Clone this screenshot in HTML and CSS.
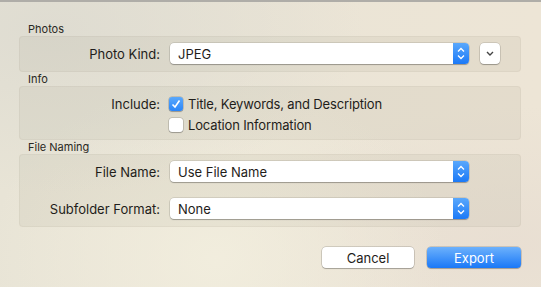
FILE: index.html
```html
<!DOCTYPE html>
<html lang="en">
<head>
    <meta charset="UTF-8">
    <title>Export</title>
    <link rel="stylesheet" href="styles.css">
</head>
<body>

<div class="sheet">
    <div class="section-title">Photos</div>
    <div class="group">
        <div class="row">
            <div class="row-label">Photo Kind:</div>
            <div class="popup">
                <span class="popup-text">JPEG</span>
                <span class="stepper">
                    <svg width="16" height="21" viewBox="0 0 16 21"><path d="M5 8.5 L8 5.5 L11 8.5 M5 12.5 L8 15.5 L11 12.5" fill="none" stroke="#fff" stroke-width="1.3"/></svg>
                </span>
            </div>
            <button class="disclosure">
                <svg width="20" height="21" viewBox="0 0 20 21"><path d="M7 9 L10 12 L13 9" fill="none" stroke="#444" stroke-width="1.4"/></svg>
            </button>
        </div>
    </div>

    <div class="section-title">Info</div>
    <div class="group group-info">
        <div class="row check-row">
            <div class="row-label">Include:</div>
            <span class="check checked">
                <svg width="14" height="14" viewBox="0 0 14 14"><path d="M3.5 7.5 L6 10 L10.5 3.5" fill="none" stroke="#fff" stroke-width="1.6"/></svg>
            </span>
            <span class="check-text">Title, Keywords, and Description</span>
        </div>
        <div class="row check-row">
            <div class="row-label"></div>
            <span class="check"></span>
            <span class="check-text">Location Information</span>
        </div>
    </div>

    <div class="section-title">File Naming</div>
    <div class="group group-naming">
        <div class="row">
            <div class="row-label">File Name:</div>
            <div class="popup">
                <span class="popup-text">Use File Name</span>
                <span class="stepper">
                    <svg width="16" height="21" viewBox="0 0 16 21"><path d="M5 8.5 L8 5.5 L11 8.5 M5 12.5 L8 15.5 L11 12.5" fill="none" stroke="#fff" stroke-width="1.3"/></svg>
                </span>
            </div>
        </div>
        <div class="row">
            <div class="row-label">Subfolder Format:</div>
            <div class="popup">
                <span class="popup-text">None</span>
                <span class="stepper">
                    <svg width="16" height="21" viewBox="0 0 16 21"><path d="M5 8.5 L8 5.5 L11 8.5 M5 12.5 L8 15.5 L11 12.5" fill="none" stroke="#fff" stroke-width="1.3"/></svg>
                </span>
            </div>
        </div>
    </div>

    <div class="actions">
        <button class="btn">Cancel</button>
        <button class="btn btn-primary">Export</button>
    </div>
</div>

</body>
</html>
```

FILE: styles.css
```css
/* General styles */
body {
    margin: 0;
    padding: 0;
    font-family: Inter, "Liberation Sans", Arial, sans-serif;
    color: #1f1d1a;
    background-color: #ece6d5;
    background-image:
        radial-gradient(ellipse at 10% 10%, rgba(220, 218, 208, 0.8), rgba(220, 218, 208, 0) 45%),
        radial-gradient(ellipse at 40% 90%, rgba(242, 238, 222, 0.9), rgba(242, 238, 222, 0) 50%),
        radial-gradient(ellipse at 95% 85%, rgba(232, 222, 210, 0.9), rgba(232, 222, 210, 0) 40%),
        linear-gradient(90deg, #e8e4d6, #ede5d6);
    height: 287px;
    overflow: hidden;
}

.sheet {
    border-top: 2px solid #afada8;
    padding: 20px 20px 0 19px;
    width: 502px;
}

.section-title {
    font-size: 11px;
    line-height: 14px;
    height: 14px;
    padding-left: 9px;
    color: #2a2823;
}

.group {
    background-color: rgba(120, 110, 80, 0.07);
    box-shadow: inset 0 0 0 1px rgba(120, 110, 80, 0.06);
    border-radius: 4px;
    padding: 7px 0 8px;
}

.group-info {
    padding: 7px 0 5px;
}

.group-naming {
    display: flex;
    flex-direction: column;
    gap: 16px;
}

.row {
    display: flex;
    align-items: center;
    height: 21px;
    font-size: 13px;
}

.row-label {
    width: 141px;
    margin-right: 10px;
    text-align: right;
    flex-shrink: 0;
}

/* Popup button */
.popup {
    display: flex;
    align-items: center;
    width: 299px;
    height: 21px;
    background-color: #fff;
    border-radius: 4px;
    box-shadow: 0 0 0 0.5px rgba(0, 0, 0, 0.18), 0 1px 1px rgba(0, 0, 0, 0.25);
    overflow: hidden;
}

.popup-text {
    flex: 1;
    padding-left: 8px;
}

.stepper {
    width: 16px;
    height: 21px;
    background: linear-gradient(#5aa8fc, #1b79f7);
    display: flex;
}

.disclosure {
    margin-left: 11px;
    width: 20px;
    height: 21px;
    padding: 0;
    border: none;
    background-color: #fff;
    border-radius: 4px;
    box-shadow: 0 0 0 0.5px rgba(0, 0, 0, 0.2), 0 1px 1px rgba(0, 0, 0, 0.25);
    display: flex;
}

/* Checkboxes */
.check {
    width: 14px;
    height: 14px;
    margin-left: -1px;
    border-radius: 3px;
    background-color: #fff;
    box-shadow: 0 0 0 0.5px rgba(0, 0, 0, 0.25), 0 1px 1px rgba(0, 0, 0, 0.2);
    display: flex;
}

.check.checked {
    background: linear-gradient(#5aa8fc, #2a85f8);
}

.check-text {
    margin-left: 5px;
    letter-spacing: -0.15px;
}

/* Buttons */
.actions {
    display: flex;
    justify-content: flex-end;
    gap: 13px;
    margin-top: 20px;
}

.btn {
    width: 92px;
    height: 21px;
    padding: 0;
    border: none;
    border-radius: 4px;
    font-family: inherit;
    font-size: 13px;
    color: #1f1d1a;
    background-color: #fff;
    box-shadow: 0 0 0 0.5px rgba(0, 0, 0, 0.25), 0 1px 1px rgba(0, 0, 0, 0.2);
}

.btn-primary {
    width: 94px;
    color: #fff;
    background: linear-gradient(#6cb1fc, #1a78f7);
}
```
